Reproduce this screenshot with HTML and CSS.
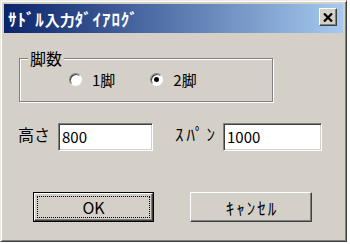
FILE: index.html
```html
<!DOCTYPE html>
<html lang="ja">
<head>
<meta charset="utf-8">
<link rel="stylesheet" href="styles.css">
</head>
<body>
<div class="window">
  <div class="titlebar">
    <span class="title"><span class="hk">ｻﾄﾞﾙ</span>入力<span class="hk">ﾀﾞｲｱﾛｸﾞ</span></span>
    <span class="close">
      <svg width="10" height="9" viewBox="0 0 10 9"><path d="M1 0.5 L9 8.5 M9 0.5 L1 8.5" stroke="#000" stroke-width="2.2"/></svg>
    </span>
  </div>
  <div class="content">
    <fieldset class="group">
      <legend class="legend">脚数</legend>
      <div class="radios">
        <label class="radio"><span class="dot"></span><span class="rlabel">1脚</span></label>
        <label class="radio"><span class="dot checked"></span><span class="rlabel">2脚</span></label>
      </div>
    </fieldset>
    <div class="fields">
      <span class="flabel">高さ</span>
      <span class="input">800</span>
      <span class="flabel second">ｽﾊﾟﾝ</span>
      <span class="input wide">1000</span>
    </div>
    <div class="buttons">
      <div class="btn default"><span class="focus">OK</span></div>
      <div class="btn cancel"><span class="face">ｷｬﾝｾﾙ</span></div>
    </div>
  </div>
</div>
</body>
</html>
```
FILE: styles.css
```css
html, body {
  margin: 0;
  padding: 0;
  background: #ffffff;
}
.window {
  width: 347px;
  height: 242px;
  box-sizing: border-box;
  background: #d4d0c8;
  border: 1px solid;
  border-color: #ecebe6 #404040 #404040 #ecebe6;
  box-shadow: inset 1px 1px #ffffff, inset -1px -1px #808080;
  padding: 3px;
  display: flex;
  flex-direction: column;
  font-family: "Noto Sans CJK JP", "Noto Sans", sans-serif;
  color: #000;
}
.titlebar {
  height: 29px;
  background: linear-gradient(to right, #0a246a, #a6caf0);
  display: flex;
  align-items: center;
  justify-content: space-between;
  padding: 0 6px 0 4px;
  flex: none;
}
.title {
  color: #fff;
  font-size: 15px;
  font-weight: bold;
  line-height: 18px;
  margin-top: 2px;
  white-space: nowrap;
}
.title .hk {
  font-size: 17px;
  letter-spacing: 0.9px;
}
.close {
  width: 18px;
  height: 18px;
  box-sizing: border-box;
  background: #d4d0c8;
  border: 1px solid;
  border-color: #ffffff #404040 #404040 #ffffff;
  box-shadow: inset -1px -1px #808080;
  display: flex;
  align-items: center;
  justify-content: center;
  margin-top: -3px;
}
.content {
  display: flex;
  flex-direction: column;
  align-items: flex-start;
}
.group {
  margin: 16px 0 0 15px;
  padding: 0;
  width: 254px;
  box-sizing: border-box;
  border: 1px solid #808080;
  box-shadow: inset 1px 1px #ffffff, 1px 1px #ffffff;
}
.legend {
  margin-left: 8px;
  padding: 0 2px;
  font-size: 16px;
  line-height: 18px;
  background: #d4d0c8;
}
.radios {
  height: 34px;
  display: flex;
  align-items: flex-start;
  padding: 6px 0 0 49px;
  box-sizing: border-box;
  gap: 35px;
}
.radio {
  display: flex;
  align-items: center;
  gap: 10px;
  height: 13px;
}
.dot {
  width: 13px;
  height: 13px;
  box-sizing: border-box;
  border-radius: 50%;
  background: #fff;
  border: 1px solid;
  border-color: #808080 #ffffff #ffffff #808080;
  box-shadow: inset 1px 1px #404040;
  position: relative;
}
.dot.checked::after {
  content: "";
  position: absolute;
  left: 3px;
  top: 3px;
  width: 5px;
  height: 5px;
  border-radius: 50%;
  background: #000;
}
.rlabel {
  font-size: 15px;
  line-height: 14px;
}
.fields {
  margin: 21px 0 0 14px;
  display: flex;
  align-items: center;
  height: 28px;
}
.flabel {
  font-size: 16px;
  line-height: 20px;
  width: 40px;
  margin-top: -6px;
}
.flabel.second {
  width: 50px;
  margin-left: 22px;
  font-size: 17px;
  letter-spacing: 3px;
}
.input {
  width: 95px;
  height: 28px;
  box-sizing: border-box;
  background: #fff;
  border: 1px solid;
  border-color: #808080 #ffffff #ffffff #808080;
  box-shadow: inset 1px 1px #404040, inset -1px -1px #d4d0c8;
  padding: 2px 3px;
  font-size: 15px;
  line-height: 22px;
}
.input.wide {
  width: 99px;
  margin-left: -2px;
}
.buttons {
  margin: 41px 0 0 29px;
  display: flex;
  gap: 36px;
}
.btn {
  width: 121px;
  height: 30px;
  box-sizing: border-box;
  background: #d4d0c8;
  font-size: 16px;
  display: flex;
}
.btn.default {
  border: 1px solid #000;
  padding: 0;
}
.btn.default .focus {
  flex: 1;
  border: 1px solid;
  border-color: #ffffff #404040 #404040 #ffffff;
  box-shadow: inset -1px -1px #808080;
  display: flex;
  align-items: center;
  justify-content: center;
  outline: 1px dotted #000;
  outline-offset: -4px;
}
.btn.cancel {
  width: 122px;
  border: 1px solid;
  border-color: #ffffff #404040 #404040 #ffffff;
  box-shadow: inset -1px -1px #808080;
}
.btn .face {
  flex: 1;
  display: flex;
  align-items: center;
  justify-content: center;
  font-size: 17px;
  letter-spacing: 2px;
  padding-left: 2px;
}
```
